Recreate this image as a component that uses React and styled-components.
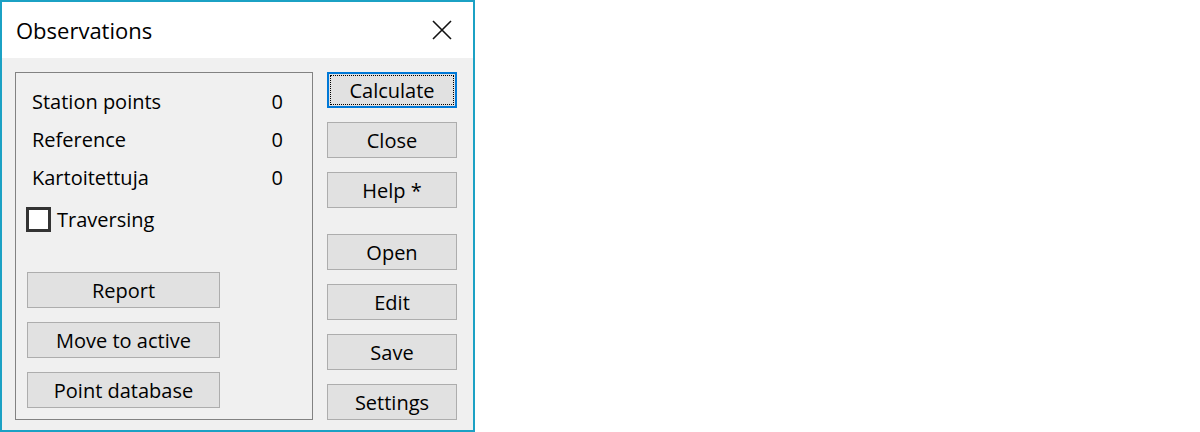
import React, { useState } from 'react';
import styled, { createGlobalStyle } from 'styled-components';

const GlobalStyle = createGlobalStyle`
  body {
    margin: 0;
    background: #fff;
    font-family: 'Open Sans', 'Noto Sans', sans-serif;
  }
`;

const counts = [
  { label: 'Station points', value: 0 },
  { label: 'Reference', value: 0 },
  { label: 'Kartoitettuja', value: 0 },
];

const leftActions = ['Report', 'Move to active', 'Point database'];
const topActions = ['Calculate', 'Close', 'Help *'];
const fileActions = ['Open', 'Edit', 'Save', 'Settings'];

const App = () => {
  const [traversing, setTraversing] = useState(false);

  return (
    <>
      <GlobalStyle />
      <Window>
        <TitleBar>
          <Title>Observations</Title>
          <CloseIcon viewBox="0 0 20 20">
            <path d="M1 1 L19 19 M19 1 L1 19" stroke="#111" strokeWidth="1.6" fill="none" />
          </CloseIcon>
        </TitleBar>
        <Body>
          <GroupBox>
            {counts.map(row => (
              <CountRow key={row.label}>
                <span>{row.label}</span>
                <span>{row.value}</span>
              </CountRow>
            ))}
            <CheckRow onClick={() => setTraversing(!traversing)}>
              <CheckBox>{traversing && '✓'}</CheckBox>
              Traversing
            </CheckRow>
            <ButtonStack $bottom>
              {leftActions.map(name => (
                <Button key={name} $wide>{name}</Button>
              ))}
            </ButtonStack>
          </GroupBox>
          <SideColumn>
            <ButtonStack>
              {topActions.map((name, i) => (
                <Button key={name} $focused={i === 0}>{name}</Button>
              ))}
            </ButtonStack>
            <ButtonStack>
              {fileActions.map(name => (
                <Button key={name}>{name}</Button>
              ))}
            </ButtonStack>
          </SideColumn>
        </Body>
      </Window>
    </>
  );
};

export default App;

const Window = styled.div`
  width: 475px;
  height: 432px;
  box-sizing: border-box;
  border: 2px solid #1ba1c4;
  display: flex;
  flex-direction: column;
  color: #000;
`;

const TitleBar = styled.div`
  height: 56px;
  flex: none;
  background: #fff;
  display: flex;
  align-items: center;
  justify-content: space-between;
  padding: 0 21px 0 14px;
`;

const Title = styled.div`
  font-size: 22px;
`;

const CloseIcon = styled.svg`
  width: 20px;
  height: 20px;
`;

const Body = styled.div`
  flex: 1;
  background: #f0f0f0;
  display: flex;
  column-gap: 14px;
  padding: 14px 0 0 13px;
`;

const GroupBox = styled.div`
  width: 298px;
  height: 348px;
  box-sizing: border-box;
  border: 1px solid #828282;
  display: flex;
  flex-direction: column;
  padding: 10px 29px 11px 16px;
`;

const CountRow = styled.div`
  display: flex;
  justify-content: space-between;
  height: 38px;
  line-height: 38px;
  font-size: 20px;
`;

const CheckRow = styled.label`
  display: flex;
  align-items: center;
  column-gap: 6px;
  margin: 10px 0 0 -6px;
  font-size: 20px;
  height: 25px;
  cursor: default;
`;

const CheckBox = styled.span`
  width: 25px;
  height: 25px;
  box-sizing: border-box;
  border: 3px solid #333;
  background: #fff;
  display: flex;
  align-items: center;
  justify-content: center;
  font-size: 16px;
`;

const ButtonStack = styled.div`
  display: flex;
  flex-direction: column;
  row-gap: 14px;
  margin-top: ${p => (p.$bottom ? 'auto' : '0')};
`;

const SideColumn = styled.div`
  width: 130px;
  display: flex;
  flex-direction: column;
  row-gap: 26px;
`;

const Button = styled.button`
  position: relative;
  width: ${p => (p.$wide ? '193px' : '130px')};
  height: 36px;
  margin-left: ${p => (p.$wide ? '-5px' : '0')};
  box-sizing: border-box;
  background: #e1e1e1;
  border: ${p => (p.$focused ? '2px solid #0078d7' : '1px solid #adadad')};
  border-radius: 0;
  padding: 0;
  font-family: inherit;
  font-size: 20px;
  color: #000;
  &::after {
    content: '';
    display: ${p => (p.$focused ? 'block' : 'none')};
    position: absolute;
    inset: 1px;
    border: 1px dotted #000;
  }
`;
